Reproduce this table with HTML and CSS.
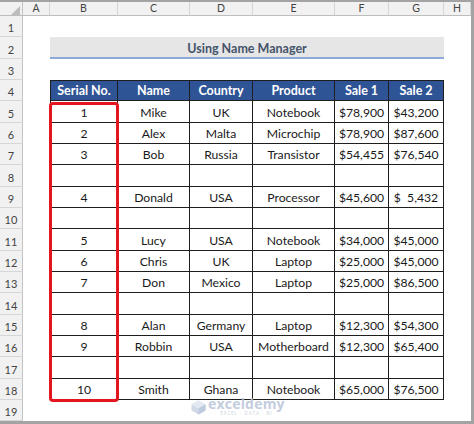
FILE: index.html
```html
<!DOCTYPE html>
<html>
<head>
<meta charset="utf-8">
<link rel="stylesheet" href="styles.css">
</head>
<body>
<div class="frame">
  <div class="sheet">
    <div class="row colhead">
      <div class="corner"><svg width="22" height="14" viewBox="0 0 22 14"><polygon points="20,4 20,13 11,13" fill="#bdbdbd"/></svg></div>
      <div class="ch">A</div><div class="ch">B</div><div class="ch">C</div><div class="ch">D</div><div class="ch">E</div><div class="ch">F</div><div class="ch">G</div><div class="ch">H</div>
    </div>
    <div class="row"><div class="rh">1</div></div>
    <div class="row tall"><div class="rh">2</div><div class="blank"></div><div class="title">Using Name Manager</div></div>
    <div class="row"><div class="rh">3</div></div>
    <div class="row"><div class="rh">4</div><div class="blank"></div>
      <div class="c t tl hd">Serial No.</div><div class="c t hd">Name</div><div class="c t hd">Country</div><div class="c t hd">Product</div><div class="c t hd">Sale 1</div><div class="c t hd">Sale 2</div></div>
    <div class="row tall"><div class="rh">5</div><div class="blank"></div>
      <div class="c t tl">1</div><div class="c t">Mike</div><div class="c t">UK</div><div class="c t">Notebook</div><div class="c t">$78,900</div><div class="c t">$43,200</div></div>
    <div class="row"><div class="rh">6</div><div class="blank"></div>
      <div class="c t tl">2</div><div class="c t">Alex</div><div class="c t">Malta</div><div class="c t">Microchip</div><div class="c t">$78,900</div><div class="c t">$87,600</div></div>
    <div class="row"><div class="rh">7</div><div class="blank"></div>
      <div class="c t tl">3</div><div class="c t">Bob</div><div class="c t">Russia</div><div class="c t">Transistor</div><div class="c t">$54,455</div><div class="c t">$76,540</div></div>
    <div class="row tall"><div class="rh">8</div><div class="blank"></div>
      <div class="c t tl"></div><div class="c t"></div><div class="c t"></div><div class="c t"></div><div class="c t"></div><div class="c t"></div></div>
    <div class="row"><div class="rh">9</div><div class="blank"></div>
      <div class="c t tl">4</div><div class="c t">Donald</div><div class="c t">USA</div><div class="c t">Processor</div><div class="c t">$45,600</div><div class="c t">$&nbsp;&nbsp;5,432</div></div>
    <div class="row"><div class="rh">10</div><div class="blank"></div>
      <div class="c t tl"></div><div class="c t"></div><div class="c t"></div><div class="c t"></div><div class="c t"></div><div class="c t"></div></div>
    <div class="row tall"><div class="rh">11</div><div class="blank"></div>
      <div class="c t tl">5</div><div class="c t">Lucy</div><div class="c t">USA</div><div class="c t">Notebook</div><div class="c t">$34,000</div><div class="c t">$45,000</div></div>
    <div class="row"><div class="rh">12</div><div class="blank"></div>
      <div class="c t tl">6</div><div class="c t">Chris</div><div class="c t">UK</div><div class="c t">Laptop</div><div class="c t">$25,000</div><div class="c t">$45,000</div></div>
    <div class="row"><div class="rh">13</div><div class="blank"></div>
      <div class="c t tl">7</div><div class="c t">Don</div><div class="c t">Mexico</div><div class="c t">Laptop</div><div class="c t">$25,000</div><div class="c t">$86,500</div></div>
    <div class="row tall"><div class="rh">14</div><div class="blank"></div>
      <div class="c t tl"></div><div class="c t"></div><div class="c t"></div><div class="c t"></div><div class="c t"></div><div class="c t"></div></div>
    <div class="row"><div class="rh">15</div><div class="blank"></div>
      <div class="c t tl">8</div><div class="c t">Alan</div><div class="c t">Germany</div><div class="c t">Laptop</div><div class="c t">$12,300</div><div class="c t">$54,300</div></div>
    <div class="row"><div class="rh">16</div><div class="blank"></div>
      <div class="c t tl">9</div><div class="c t">Robbin</div><div class="c t">USA</div><div class="c t">Motherboard</div><div class="c t">$12,300</div><div class="c t">$65,400</div></div>
    <div class="row tall"><div class="rh">17</div><div class="blank"></div>
      <div class="c t tl"></div><div class="c t"></div><div class="c t"></div><div class="c t"></div><div class="c t"></div><div class="c t"></div></div>
    <div class="row"><div class="rh">18</div><div class="blank"></div>
      <div class="c t tl">10</div><div class="c t">Smith</div><div class="c t">Ghana</div><div class="c t">Notebook</div><div class="c t">$65,000</div><div class="c t">$76,500</div></div>
    <div class="row"><div class="rh">19</div></div>
  </div>
  <div class="highlight"></div>
  <div class="watermark">
    <svg class="wm-logo" width="15" height="15" viewBox="0 0 15 15">
      <polygon points="7.5,0.5 14.5,4.5 14.5,10.5 7.5,14.5 0.5,10.5 0.5,4.5" fill="#c9d3e3"/>
      <polygon points="7.5,0.5 14.5,4.5 7.5,8.5 0.5,4.5" fill="#dfe6f0"/>
      <polygon points="7.5,8.5 14.5,4.5 14.5,10.5 7.5,14.5" fill="#b3c1d8"/>
    </svg>
    <div class="wm-text">
      <div class="wm-name">exceldemy</div>
      <div class="wm-sub">EXCEL · DATA · BI</div>
    </div>
  </div>
</div>
</body>
</html>
```

FILE: styles.css
```css
* { box-sizing: border-box; }
body { margin: 0; font-family: "Lato", "Liberation Sans", sans-serif; }
.frame {
  position: relative;
  width: 474px;
  height: 424px;
  background: #a3a3a3;
  padding-top: 2px;
  overflow: hidden;
}
.sheet { width: 471px; background: #fff; }
.row {
  display: grid;
  grid-template-columns: 23px 27px 68px 72px 63px 82px 54px 55px 27px;
  height: 21px;
}
.row.tall { height: 22px; }
.colhead { height: 14px; background: #f1f1f1; }
.corner { border-right: 1px solid #c3c3c3; border-bottom: 1px solid #bdbdbd; overflow: hidden; }
.corner svg { display: block; }
.ch {
  border-right: 1px solid #d4d4d4;
  border-bottom: 1px solid #bdbdbd;
  font-size: 10.5px;
  line-height: 13px;
  text-align: center;
  color: #444;
}
.rh {
  background: #f1f1f1;
  border-right: 1px solid #c3c3c3;
  border-bottom: 1px solid #d6d6d6;
  display: flex;
  align-items: flex-end;
  justify-content: center;
  padding-bottom: 2px;
  font-size: 11px;
  line-height: 13px;
  color: #444;
}
.title {
  grid-column: 3 / 9;
  background: #e7e6e6;
  border-bottom: 2px solid #8eaadb;
  display: flex;
  align-items: center;
  justify-content: center;
  padding-top: 2px;
  font-weight: 700;
  font-size: 12.5px;
  color: #44546a;
}
.c {
  display: flex;
  align-items: flex-end;
  justify-content: center;
  padding-bottom: 2px;
  font-size: 12.2px;
  line-height: 15px;
  color: #1a1a1a;
  white-space: pre;
}
.t { border-right: 1px solid #1e1e1e; border-bottom: 1px solid #1e1e1e; }
.tl { border-left: 1px solid #1e1e1e; }
.hd {
  background: #2f5496;
  color: #fff;
  font-weight: 700;
  font-size: 12.5px;
  border-top: 1px solid #1e1e1e;
  align-items: center;
  padding-bottom: 0;
}
.highlight {
  position: absolute;
  left: 49px;
  top: 102px;
  width: 70px;
  height: 300px;
  border: 3px solid #e2161f;
  border-radius: 4px;
}
.watermark {
  position: absolute;
  left: 191px;
  top: 398px;
  display: flex;
  align-items: center;
  gap: 2px;
  opacity: 0.85;
}
.wm-logo { display: block; }
.wm-text { display: flex; flex-direction: column; align-items: center; }
.wm-name {
  font-family: "Open Sans", sans-serif;
  font-weight: 700;
  font-size: 14px;
  line-height: 12px;
  height: 12px;
  overflow: visible;
  color: #b9c5d9;
  letter-spacing: 0.2px;
}
.wm-sub {
  font-family: "Open Sans", sans-serif;
  font-size: 4.5px;
  line-height: 6px;
  color: #c3cbd8;
  letter-spacing: 1px;
}
```
